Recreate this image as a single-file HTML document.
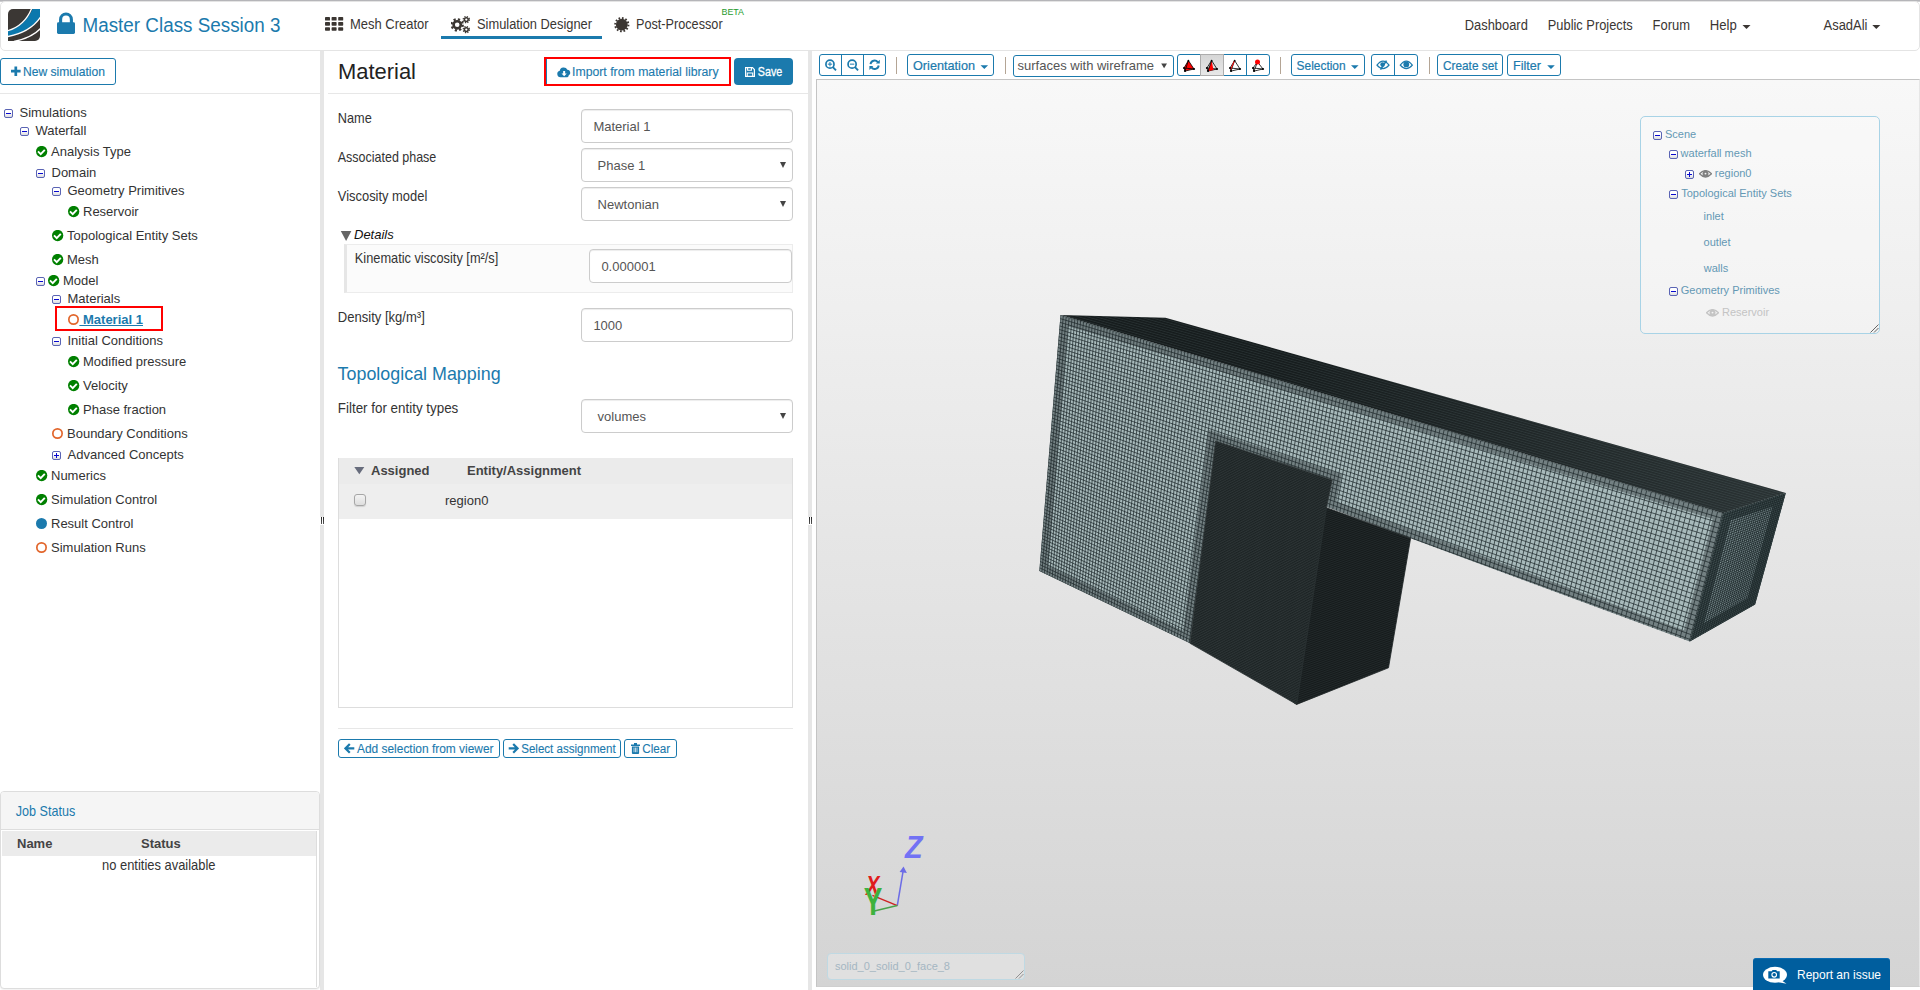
<!DOCTYPE html>
<html lang="en">
<head>
<meta charset="utf-8">
<title>Master Class Session 3</title>
<style>
*{box-sizing:border-box;margin:0;padding:0}
html,body{width:1920px;height:990px;overflow:hidden;background:#fff}
body{position:relative;font-family:"Liberation Sans",sans-serif;font-size:13px;color:#333}
.abs{position:absolute}
/* tree */
.tg{position:absolute;width:9px;height:9px;border:1px solid #5a64b4;border-radius:2px;background:linear-gradient(#fff 35%,#dcdce0)}
.tg:before{content:"";position:absolute;left:1px;top:2.8px;width:5px;height:1.5px;background:#0808d0}
.tg.plus:after{content:"";position:absolute;left:2.8px;top:1px;width:1.5px;height:5px;background:#0808d0}
.circ{position:absolute;width:11px;height:11px;border-radius:50%;box-shadow:inset 0 0 0 1.7px #e2662c}
.dot{position:absolute;width:11px;height:11px;border-radius:50%;background:#1b7aad}
.tr{position:absolute;white-space:nowrap;line-height:15px;font-size:13px;color:#333}
/* form */
.inp{position:absolute;height:34px;border:1px solid #ccc;border-radius:4px;background:#fff;box-shadow:inset 0 1px 1px rgba(0,0,0,.075)}
.inp span{position:absolute;top:9px;font-size:13px;line-height:15px;color:#555;white-space:nowrap}
.inp i{position:absolute;right:6px;top:13px;width:0;height:0;border-left:3px solid transparent;border-right:3px solid transparent;border-top:6px solid #444}
.btn{position:absolute;border:1px solid #1b7aad;border-radius:3px;background:#fff;color:#1b7aad;white-space:nowrap}
</style>
</head>
<body>
<div class="abs" style="left:0;top:0;width:1920px;height:2px;background:linear-gradient(#a9a9ad,#d9d9db)"></div>
<div class="abs" style="left:0;top:1px;width:1920px;height:50px;border:1px solid #e4e4e4;border-radius:5px;background:#fff"></div>
<svg class="abs" style="left:8px;top:9px" width="32" height="32" viewBox="0 0 32 32">
<defs><clipPath id="lg"><path d="M5 0H32V27a5 5 0 0 1-5 5H0V5a5 5 0 0 1 5-5z"/></clipPath></defs>
<g clip-path="url(#lg)"><rect width="32" height="32" fill="#3b3734"/>
<path d="M24.5 0H32V8.5C25 18 14 24.5 0 27V22C11 19 19.5 11.5 24.5 0z" fill="#0b78ad"/>
<path d="M23.6 -0.5C19 11 11 18.5 -0.5 21.8" fill="none" stroke="#fff" stroke-width="1.3"/>
<path d="M32.5 8.2C25.5 18.5 14 25 -0.5 27.6" fill="none" stroke="#fff" stroke-width="1.3"/>
<path d="M32.5 19.5C27 25.5 18 30 6 32.5" fill="none" stroke="#fff" stroke-width="1.3"/>
</g></svg>
<svg class="abs" style="left:57px;top:12px" width="18" height="22" viewBox="0 0 18 22">
<path d="M3.6 11V7.4a5.4 5.4 0 0 1 10.8 0V11" fill="none" stroke="#1b7aad" stroke-width="3.1"/>
<rect x="0" y="10.3" width="18" height="11.7" rx="1.4" fill="#1b7aad"/></svg>
<div class="abs" style="left:441px;top:36px;width:161px;height:3px;background:#1b7aad"></div>
<svg class="abs" style="left:325px;top:17px" width="19" height="14" viewBox="0 0 19 14" fill="#3b3632">
<rect x="0" y="0" width="5" height="3.6" rx=".7"/><rect x="6.6" y="0" width="5" height="3.6" rx=".7"/><rect x="13.2" y="0" width="5" height="3.6" rx=".7"/>
<rect x="0" y="5.1" width="5" height="3.6" rx=".7"/><rect x="6.6" y="5.1" width="5" height="3.6" rx=".7"/><rect x="13.2" y="5.1" width="5" height="3.6" rx=".7"/>
<rect x="0" y="10.2" width="5" height="3.6" rx=".7"/><rect x="6.6" y="10.2" width="5" height="3.6" rx=".7"/><rect x="13.2" y="10.2" width="5" height="3.6" rx=".7"/></svg>
<svg class="abs" style="left:451px;top:15px" width="20" height="19" viewBox="0 0 20 19">
<g fill="none" stroke="#3b3632">
<circle cx="6.2" cy="9.8" r="3.6" stroke-width="2.6"/>
<circle cx="6.2" cy="9.8" r="5.6" stroke-width="2.2" stroke-dasharray="2.2 2.2"/>
<circle cx="15.3" cy="4.6" r="1.9" stroke-width="1.5"/>
<circle cx="15.3" cy="4.6" r="3.1" stroke-width="1.3" stroke-dasharray="1.25 1.2"/>
<circle cx="15.3" cy="14.6" r="1.9" stroke-width="1.5"/>
<circle cx="15.3" cy="14.6" r="3.1" stroke-width="1.3" stroke-dasharray="1.25 1.2"/>
</g></svg>
<svg class="abs" style="left:613px;top:16px" width="18" height="18" viewBox="0 0 18 18">
<circle cx="8.8" cy="8.7" r="5.9" fill="#3b3632"/>
<circle cx="8.8" cy="8.7" r="6.6" fill="none" stroke="#3b3632" stroke-width="2" stroke-dasharray="1.7 1.75"/></svg>
<svg class="abs" style="left:0;top:0" width="1920" height="56" font-family="Liberation Sans, sans-serif" fill="#3a3633">
<text x="82.5" y="31.6" font-size="19.6" fill="#1b7aad" textLength="198" lengthAdjust="spacingAndGlyphs">Master Class Session 3</text>
<g font-size="14">
<text x="350" y="28.5" textLength="78.6" lengthAdjust="spacingAndGlyphs">Mesh Creator</text>
<text x="477" y="28.5" textLength="115" lengthAdjust="spacingAndGlyphs">Simulation Designer</text>
<text x="636" y="28.5" textLength="86.6" lengthAdjust="spacingAndGlyphs">Post-Processor</text>
<text x="1464.8" y="29.5" textLength="63" lengthAdjust="spacingAndGlyphs">Dashboard</text>
<text x="1547.8" y="29.5" textLength="85" lengthAdjust="spacingAndGlyphs">Public Projects</text>
<text x="1652.5" y="29.5" textLength="37.5" lengthAdjust="spacingAndGlyphs">Forum</text>
<text x="1709.8" y="29.5" textLength="27" lengthAdjust="spacingAndGlyphs">Help</text>
<text x="1823.5" y="29.5" textLength="44" lengthAdjust="spacingAndGlyphs">AsadAli</text>
</g>
<text x="721.5" y="15" font-size="9.2" fill="#1e9a2c" textLength="22.5" lengthAdjust="spacingAndGlyphs">BETA</text>
<path d="M1742.5 25h8l-4 4zM1872.3 25h8l-4 4z"/>
</svg>
<!--NAVEND-->
<div class="abs" style="left:320px;top:51px;width:4px;height:939px;background:#e6e6e6"></div>
<div class="abs" style="left:0;top:93px;width:320px;height:1px;background:#e7e7e7"></div>
<div class="btn" style="left:0;top:58px;width:116px;height:27px;border-radius:3px"></div>
<svg class="abs" style="left:10px;top:66px" width="11" height="11" viewBox="0 0 11 11"><path d="M5.8 0.4V10M1 5.2H10.6" stroke="#1b7aad" stroke-width="2.7" fill="none"/></svg>
<i class="tg" style="left:4px;top:109px"></i>
<div class="tr" style="left:19.5px;top:105px">Simulations</div>
<i class="tg" style="left:20px;top:127px"></i>
<div class="tr" style="left:35.5px;top:123px">Waterfall</div>
<svg class="abs" style="left:36px;top:146px" width="12" height="12" viewBox="0 0 12 12"><circle cx="5.65" cy="5.55" r="5.65" fill="#008000"/><path d="M2 5.4L4.7 8.1L8.8 3.8" fill="none" stroke="#fff" stroke-width="1.9"/></svg>
<div class="tr" style="left:51px;top:144px">Analysis Type</div>
<i class="tg" style="left:36px;top:169px"></i>
<div class="tr" style="left:51.5px;top:165px">Domain</div>
<i class="tg" style="left:52px;top:187px"></i>
<div class="tr" style="left:67.5px;top:183px">Geometry Primitives</div>
<svg class="abs" style="left:68px;top:206px" width="12" height="12" viewBox="0 0 12 12"><circle cx="5.65" cy="5.55" r="5.65" fill="#008000"/><path d="M2 5.4L4.7 8.1L8.8 3.8" fill="none" stroke="#fff" stroke-width="1.9"/></svg>
<div class="tr" style="left:83px;top:204px">Reservoir</div>
<svg class="abs" style="left:52px;top:230px" width="12" height="12" viewBox="0 0 12 12"><circle cx="5.65" cy="5.55" r="5.65" fill="#008000"/><path d="M2 5.4L4.7 8.1L8.8 3.8" fill="none" stroke="#fff" stroke-width="1.9"/></svg>
<div class="tr" style="left:67px;top:228px">Topological Entity Sets</div>
<svg class="abs" style="left:52px;top:254px" width="12" height="12" viewBox="0 0 12 12"><circle cx="5.65" cy="5.55" r="5.65" fill="#008000"/><path d="M2 5.4L4.7 8.1L8.8 3.8" fill="none" stroke="#fff" stroke-width="1.9"/></svg>
<div class="tr" style="left:67px;top:252px">Mesh</div>
<i class="tg" style="left:36px;top:277px"></i>
<div class="tr" style="left:63px;top:273px">Model</div>
<i class="tg" style="left:52px;top:295px"></i>
<div class="tr" style="left:67.5px;top:291px">Materials</div>
<i class="tg" style="left:52px;top:337px"></i>
<div class="tr" style="left:67.5px;top:333px">Initial Conditions</div>
<svg class="abs" style="left:68px;top:356px" width="12" height="12" viewBox="0 0 12 12"><circle cx="5.65" cy="5.55" r="5.65" fill="#008000"/><path d="M2 5.4L4.7 8.1L8.8 3.8" fill="none" stroke="#fff" stroke-width="1.9"/></svg>
<div class="tr" style="left:83px;top:354px">Modified pressure</div>
<svg class="abs" style="left:68px;top:380px" width="12" height="12" viewBox="0 0 12 12"><circle cx="5.65" cy="5.55" r="5.65" fill="#008000"/><path d="M2 5.4L4.7 8.1L8.8 3.8" fill="none" stroke="#fff" stroke-width="1.9"/></svg>
<div class="tr" style="left:83px;top:378px">Velocity</div>
<svg class="abs" style="left:68px;top:404px" width="12" height="12" viewBox="0 0 12 12"><circle cx="5.65" cy="5.55" r="5.65" fill="#008000"/><path d="M2 5.4L4.7 8.1L8.8 3.8" fill="none" stroke="#fff" stroke-width="1.9"/></svg>
<div class="tr" style="left:83px;top:402px">Phase fraction</div>
<i class="circ" style="left:52px;top:428px"></i>
<div class="tr" style="left:67px;top:426px">Boundary Conditions</div>
<i class="tg plus" style="left:52px;top:451px"></i>
<div class="tr" style="left:67.5px;top:447px">Advanced Concepts</div>
<svg class="abs" style="left:36px;top:470px" width="12" height="12" viewBox="0 0 12 12"><circle cx="5.65" cy="5.55" r="5.65" fill="#008000"/><path d="M2 5.4L4.7 8.1L8.8 3.8" fill="none" stroke="#fff" stroke-width="1.9"/></svg>
<div class="tr" style="left:51px;top:468px">Numerics</div>
<svg class="abs" style="left:36px;top:494px" width="12" height="12" viewBox="0 0 12 12"><circle cx="5.65" cy="5.55" r="5.65" fill="#008000"/><path d="M2 5.4L4.7 8.1L8.8 3.8" fill="none" stroke="#fff" stroke-width="1.9"/></svg>
<div class="tr" style="left:51px;top:492px">Simulation Control</div>
<i class="dot" style="left:36px;top:518px"></i>
<div class="tr" style="left:51px;top:516px">Result Control</div>
<i class="circ" style="left:36px;top:542px"></i>
<div class="tr" style="left:51px;top:540px">Simulation Runs</div>
<svg class="abs" style="left:48px;top:275px" width="12" height="12" viewBox="0 0 12 12"><circle cx="5.65" cy="5.55" r="5.65" fill="#008000"/><path d="M2 5.4L4.7 8.1L8.8 3.8" fill="none" stroke="#fff" stroke-width="1.9"/></svg>
<div class="abs" style="left:55px;top:306px;width:108px;height:25px;border:2px solid #f00"></div>
<i class="circ" style="left:68px;top:314px"></i>
<div class="tr" style="left:79.4px;top:312px;color:#1b7aad;font-weight:bold;text-decoration:underline;white-space:pre"> Material 1</div>
<div class="abs" style="left:0;top:791px;width:320px;height:198px;border:1px solid #ddd;border-radius:4px;background:#fff;box-shadow:0 1px 1px rgba(0,0,0,.05)"></div>
<div class="abs" style="left:1px;top:792px;width:318px;height:38px;background:#f5f5f5;border-bottom:1px solid #ddd;border-radius:3px 3px 0 0"></div>
<div class="abs" style="left:2px;top:831px;width:315px;height:156px;border-right:1px solid #ddd"></div>
<div class="abs" style="left:2px;top:831px;width:314px;height:25px;background:#ebebeb"></div>
<div class="tr" style="left:17px;top:836px;font-weight:bold;color:#444">Name</div>
<div class="tr" style="left:141px;top:836px;font-weight:bold;color:#444">Status</div>
<svg class="abs" style="left:0;top:56px" width="320" height="934" font-family="Liberation Sans, sans-serif">
<text x="23" y="19.9" font-size="12.1" fill="#1b7aad" stroke="#1b7aad" stroke-width=".15" textLength="82" lengthAdjust="spacingAndGlyphs">New simulation</text>
<text x="15.8" y="760" font-size="14.4" fill="#1b7aad" textLength="59.5" lengthAdjust="spacingAndGlyphs">Job Status</text>
<text x="102" y="813.7" font-size="14.2" fill="#333" textLength="113.5" lengthAdjust="spacingAndGlyphs">no entities available</text>
</svg>
<!--LEFTEND-->
<div class="abs" style="left:808px;top:51px;width:4px;height:939px;background:#e6e6e6"></div>
<div class="abs" style="left:328px;top:93px;width:480px;height:1px;background:#e7e7e7"></div>
<div class="abs" style="left:546px;top:59px;width:1px;height:25px;background:#1b7aad"></div>
<div class="abs" style="left:544px;top:57px;width:187px;height:29px;border:2px solid #f00"></div>
<svg class="abs" style="left:556.6px;top:65.8px" width="14.3" height="12.1" viewBox="0 0 13 11"><path d="M3.1 10.3a3 3 0 0 1-.6-5.9a3.6 3.6 0 0 1 6.9-.9a2.6 2.6 0 0 1 1.3 4.9a2.4 2.4 0 0 1-1.2 1.9z" fill="#1b7aad"/><path d="M5.6 4.6h1.8v2.2h1.5l-2.4 2.5l-2.4-2.5h1.5z" fill="#fff"/></svg>
<div class="abs" style="left:734px;top:58px;width:59px;height:27px;border-radius:4px;background:#1b7aad"></div>
<svg class="abs" style="left:745px;top:66.5px" width="10" height="10" viewBox="0 0 10 10"><path d="M.6.6h6.9l1.9 1.9v6.9H.6z" fill="none" stroke="#fff" stroke-width="1.2"/><path d="M2.6.6v2.7h3.8V.6M2.3 9.4V6h5.4v3.4" fill="none" stroke="#fff" stroke-width="1.1"/></svg>
<div class="inp" style="left:581px;top:109px;width:212px"><span style="left:11.4px">Material 1</span></div>
<div class="inp" style="left:581px;top:148px;width:212px"><span style="left:15.6px">Phase 1</span><i></i></div>
<div class="inp" style="left:581px;top:187px;width:212px"><span style="left:15.6px">Newtonian</span><i></i></div>
<svg class="abs" style="left:340px;top:230px" width="13" height="12" viewBox="0 0 13 12"><path d="M.8 1h10.6L6.1 11z" fill="#666"/></svg>
<div class="tr" style="left:354px;top:227px;font-style:italic;color:#111">Details</div>
<div class="abs" style="left:344px;top:244px;width:449px;height:49px;background:#fbfbfb;border:1px solid #ececec;border-left:3px solid #e6e6e6"></div>
<div class="inp" style="left:589px;top:249px;width:203px"><span style="left:11.4px">0.000001</span></div>
<div class="inp" style="left:581px;top:308px;width:212px"><span style="left:11.4px">1000</span></div>
<div class="inp" style="left:581px;top:399px;width:212px"><span style="left:15.6px">volumes</span><i></i></div>
<div class="abs" style="left:338px;top:458px;width:455px;height:250px;border:1px solid #ddd;background:#fff"></div>
<div class="abs" style="left:339px;top:458px;width:453px;height:26px;background:#ebebeb"></div>
<div class="abs" style="left:339px;top:484px;width:453px;height:35px;background:#eee"></div>
<svg class="abs" style="left:354px;top:466px" width="11" height="9" viewBox="0 0 11 9"><path d="M.3.9h10L5.3 8.2z" fill="#676c7c"/></svg>
<div class="tr" style="left:371px;top:463px;font-weight:bold;color:#444">Assigned</div>
<div class="tr" style="left:467px;top:463px;font-weight:bold;color:#444">Entity/Assignment</div>
<div class="abs" style="left:354px;top:494px;width:12px;height:12px;border:1px solid #a6a6a6;border-radius:3px;background:linear-gradient(#f3f3f3,#dedede);box-shadow:0 1px 1px rgba(0,0,0,.12)"></div>
<div class="tr" style="left:445px;top:493px">region0</div>
<div class="abs" style="left:338px;top:728px;width:455px;height:1px;background:#e7e7e7"></div>
<div class="btn" style="left:338px;top:739px;width:162px;height:19px"></div>
<div class="btn" style="left:503px;top:739px;width:118px;height:19px"></div>
<div class="btn" style="left:624px;top:739px;width:53px;height:19px"></div>
<svg class="abs" style="left:344px;top:743px" width="11" height="11" viewBox="0 0 11 11"><path d="M10.3 5.4H2M5.8 1L1.5 5.4L5.8 9.8" fill="none" stroke="#1b7aad" stroke-width="2.2"/></svg>
<svg class="abs" style="left:508px;top:743px" width="11" height="11" viewBox="0 0 11 11"><path d="M.7 5.4H9M5.2 1L9.5 5.4L5.2 9.8" fill="none" stroke="#1b7aad" stroke-width="2.2"/></svg>
<svg class="abs" style="left:631px;top:743px" width="9" height="11" viewBox="0 0 9 11"><path d="M0 1.6h9v1.3H0zM3 0h3v1.6H3zM.9 3.4h7.2v6.6a1 1 0 0 1-1 1H1.9a1 1 0 0 1-1-1z" fill="#1b7aad"/><path d="M3 4.6v4.6M4.5 4.6v4.6M6 4.6v4.6" stroke="#fff" stroke-width=".7"/></svg>
<svg class="abs" style="left:326px;top:51px" width="482" height="720" font-family="Liberation Sans, sans-serif" fill="#333">
<text x="12" y="28" font-size="21.6" fill="#222" textLength="78" lengthAdjust="spacingAndGlyphs">Material</text>
<text x="246" y="25.3" font-size="12.5" fill="#1b7aad" stroke="#1b7aad" stroke-width=".12" textLength="146.6" lengthAdjust="spacingAndGlyphs">Import from material library</text>
<text x="431.8" y="25.3" font-size="12.8" fill="#fff" stroke="#fff" stroke-width=".3" textLength="24.5" lengthAdjust="spacingAndGlyphs">Save</text>
<g font-size="14.2">
<text x="11.8" y="72" textLength="34" lengthAdjust="spacingAndGlyphs">Name</text>
<text x="11.8" y="110.6" textLength="98.5" lengthAdjust="spacingAndGlyphs">Associated phase</text>
<text x="11.8" y="149.9" textLength="89.5" lengthAdjust="spacingAndGlyphs">Viscosity model</text>
<text x="28.8" y="212.4" textLength="143.5" lengthAdjust="spacingAndGlyphs">Kinematic viscosity [m²/s]</text>
<text x="11.8" y="271.4" textLength="87" lengthAdjust="spacingAndGlyphs">Density [kg/m³]</text>
<text x="11.8" y="361.7" textLength="120.5" lengthAdjust="spacingAndGlyphs">Filter for entity types</text>
</g>
<text x="11.6" y="328.6" font-size="18.2" fill="#1b7aad" textLength="163" lengthAdjust="spacingAndGlyphs">Topological Mapping</text>
<g font-size="12.3" fill="#1b7aad" stroke="#1b7aad" stroke-width=".1">
<text x="31" y="701.8" textLength="136.5" lengthAdjust="spacingAndGlyphs">Add selection from viewer</text>
<text x="195.2" y="701.8" textLength="94.5" lengthAdjust="spacingAndGlyphs">Select assignment</text>
<text x="316.2" y="701.8" textLength="28" lengthAdjust="spacingAndGlyphs">Clear</text>
</g>
</svg>
<div class="abs" style="left:320px;top:517px;width:4px;height:8px;background:#fff"></div><div class="abs" style="left:321px;top:517px;width:1px;height:7px;background:linear-gradient(#222,#555)"></div><div class="abs" style="left:323px;top:517px;width:1px;height:7px;background:linear-gradient(#222,#555)"></div>
<div class="abs" style="left:808px;top:517px;width:4px;height:8px;background:#fff"></div><div class="abs" style="left:809px;top:517px;width:1px;height:7px;background:linear-gradient(#222,#555)"></div><div class="abs" style="left:811px;top:517px;width:1px;height:7px;background:linear-gradient(#222,#555)"></div>
<!--MIDEND-->
<div class="btn" style="left:819px;top:54px;width:67px;height:22px;"></div>
<div class="abs" style="left:841px;top:54px;width:1px;height:22px;background:#1b7aad"></div>
<div class="abs" style="left:863px;top:54px;width:1px;height:22px;background:#1b7aad"></div>
<div class="btn" style="left:907px;top:54px;width:87px;height:22px;"></div>
<div class="btn" style="left:1013px;top:55px;width:161px;height:22px;"></div>
<div class="btn" style="left:1177px;top:54px;width:93px;height:22px;"></div>
<div class="abs" style="left:1200px;top:54px;width:24px;height:22px;background:linear-gradient(#d6d6d6,#e8e8e8);border:1px solid #adadad"></div>
<div class="abs" style="left:1246px;top:54px;width:1px;height:22px;background:#1b7aad"></div>
<div class="btn" style="left:1291px;top:54px;width:74px;height:22px;"></div>
<div class="btn" style="left:1371px;top:54px;width:47px;height:22px;"></div>
<div class="abs" style="left:1394px;top:54px;width:1px;height:22px;background:#1b7aad"></div>
<div class="btn" style="left:1437px;top:54px;width:66px;height:22px;"></div>
<div class="btn" style="left:1507px;top:54px;width:54px;height:22px;"></div>
<div class="abs" style="left:896px;top:57px;width:1.4px;height:17px;background:#b4a595"></div>
<div class="abs" style="left:1005px;top:57px;width:1.4px;height:17px;background:#b4a595"></div>
<div class="abs" style="left:1280px;top:57px;width:1.4px;height:17px;background:#b4a595"></div>
<div class="abs" style="left:1429px;top:57px;width:1.4px;height:17px;background:#b4a595"></div>
<svg class="abs" style="left:812px;top:48px" width="760" height="36" font-family="Liberation Sans, sans-serif">
<g fill="none" stroke="#1b7aad" stroke-width="1.7">
<circle cx="17.97" cy="16.15" r="4.05"/><path d="M20.9 19.1L24 22.3" stroke-width="1.9"/><path d="M15.8 16.15h4.4M17.97 13.95v4.4" stroke-width="1"/>
<circle cx="40.1" cy="16.15" r="4.05"/><path d="M43 19.1L46.1 22.3" stroke-width="1.9"/><path d="M37.9 16.15h4.4" stroke-width="1"/>
<path d="M58.50 16.10A4.1 4.1 0 0 1 65.80 14.20M66.70 17.50A4.1 4.1 0 0 1 59.40 19.40" stroke-width="1.9"/>
</g>
<path d="M67.80 11.70v3.9h-3.9zM57.40 21.90v-3.9h3.9z" fill="#1b7aad"/>
<g font-size="12.2" fill="#1b7aad" stroke="#1b7aad" stroke-width=".2">
<text x="101" y="21.9" textLength="62" lengthAdjust="spacingAndGlyphs">Orientation</text>
<text x="484.6" y="21.9" textLength="49" lengthAdjust="spacingAndGlyphs">Selection</text>
<text x="631" y="21.9" textLength="54.5" lengthAdjust="spacingAndGlyphs">Create set</text>
<text x="701" y="21.9" textLength="28" lengthAdjust="spacingAndGlyphs">Filter</text>
</g>
<path d="M168.5 17.2h7.6l-3.8 3.8zM539 17.2h7.6l-3.8 3.8zM735.2 17.2h7.6l-3.8 3.8z" fill="#1b7aad"/>
<path d="M349.2 15.5h5.8l-2.9 4.8z" fill="#444"/>
<!-- tetra icons -->
<g stroke="#000" stroke-width=".8" fill="none">
<path d="M376.4 12.5L372 20L373 23.1L382 21z" fill="#f00"/><path d="M376.4 12.5L373 23.1M372 20L382 21"/>
<path d="M399.6 12.5L394.9 20L396 23.1L405 21zM394.9 20L405 21"/><path d="M399.6 12.5L396 23.1L401.5 22z" fill="#f00" stroke="none"/><path d="M399.6 12.5L396 23.1"/>
<path d="M422.6 12.5L418 20L419 23.1L428 21zM418 20L428 21M422.6 12.5L419 23.1"/><path d="M422.6 12.5L418.6 21.5" stroke="#f00" stroke-width="1"/>
<path d="M445.5 14L441 20L442 23.1L451 21zM441 20L451 21M445.5 14L442 23.1"/>
</g>
<g fill="#000">
<circle cx="376.4" cy="12.7" r=".9"/><circle cx="372" cy="20" r="1"/><circle cx="373" cy="23" r="1.1"/><circle cx="382" cy="21" r="1.1"/>
<circle cx="399.6" cy="12.7" r=".9"/><circle cx="394.9" cy="20" r="1"/><circle cx="396" cy="23" r="1.1"/><circle cx="405" cy="21" r="1.1"/>
<circle cx="422.6" cy="12.7" r=".9"/><circle cx="418" cy="20" r="1"/><circle cx="419" cy="23" r="1.1"/><circle cx="428" cy="21" r="1.1"/>
<circle cx="441" cy="20" r="1"/><circle cx="442" cy="23" r="1.1"/><circle cx="451" cy="21" r="1.1"/>
</g>
<circle cx="445.5" cy="14" r="2.5" fill="#f00"/>
<!-- eyes -->
<g fill="none" stroke="#1b7aad" stroke-width="1.3">
<path d="M565 17.2q6-8 12 0q-6 7-12 0z"/><path d="M574.5 12.6L568.5 21.6" stroke-width="1.6"/>
<path d="M588.3 17.2q6-8 12 0q-6 7-12 0z"/>
</g>
<circle cx="570.6" cy="16.6" r="2.3" fill="#1b7aad"/><circle cx="594.3" cy="16.4" r="2.9" fill="#1b7aad"/>
</svg>
<div class="tr" style="left:1017.5px;top:58px;font-size:13px;line-height:15px;color:#555">surfaces with wireframe</div>
<!--VIEWSTART-->
<svg class="abs" style="left:817px;top:80px" width="1103" height="906" viewBox="0 0 1103 906">
<defs><linearGradient id="bg" x1="0" y1="0" x2="0" y2="1"><stop offset="0" stop-color="#f8f8f8"/><stop offset="1" stop-color="#d4d4d4"/></linearGradient>
<clipPath id="cf"><polygon points="243.5,235 906,433.2 872.8,561.5 593.6,458.3 509.7,426.7 515.2,400 398.6,361 373,563.3 222.3,491"/></clipPath>
<clipPath id="ce"><polygon points="906,433.2 968.8,413 938.1,524.4 872.8,561.5"/></clipPath>
<pattern id="pd" width="2.2" height="2.2" patternUnits="userSpaceOnUse" patternTransform="rotate(-28)"><rect width="2.2" height="2.2" fill="#2d3536"/><rect width="2.2" height="1.1" fill="#1c2324"/></pattern>
<pattern id="ps" width="2" height="2" patternUnits="userSpaceOnUse" patternTransform="rotate(-20)"><rect width="2" height="2" fill="#232a2b"/><rect width="2" height="1.1" fill="#151a1b"/></pattern>
<pattern id="pt" width="2.4" height="2.4" patternUnits="userSpaceOnUse" patternTransform="rotate(16)"><rect width="2.4" height="2.4" fill="#262f30"/><rect width="2.4" height="1.4" fill="#151b1c"/></pattern>
<linearGradient id="tg" x1="0" y1="0" x2="1" y2="0"><stop offset=".3" stop-color="#8fa3a6" stop-opacity="0"/><stop offset="1" stop-color="#8fa3a6" stop-opacity=".16"/></linearGradient>
</defs>
<rect width="1103" height="906" fill="url(#bg)"/>
<polygon points="243.5,235 348.5,237.7 968.8,413 906,433.2" fill="url(#pt)"/>
<polygon points="243.5,235 348.5,237.7 968.8,413 906,433.2" fill="url(#tg)"/>
<polygon points="243.5,235 906,433.2 872.8,561.5 593.6,458.3 509.7,426.7 515.2,400 398.6,361 373,563.3 222.3,491" fill="#a8babb"/>
<g clip-path="url(#cf)"><path d="M243.5 235L222.3 491M246.3 235.9L224.9 492.2M249.2 236.7L227.4 493.5M252.1 237.6L230 494.7M255 238.4L232.6 495.9M257.8 239.3L235.2 497.2M260.7 240.2L237.8 498.4M263.6 241L240.4 499.7M266.5 241.9L243 500.9M269.5 242.8L245.6 502.2M272.4 243.6L248.2 503.4M275.3 244.5L250.9 504.7M278.3 245.4L253.5 506M281.2 246.3L256.2 507.3M284.2 247.2L258.8 508.5M287.2 248.1L261.5 509.8M290.2 249L264.2 511.1M293.1 249.9L266.9 512.4M296.1 250.7L269.6 513.7M299.2 251.6L272.3 515M302.2 252.6L275 516.3M305.2 253.5L277.7 517.6M308.2 254.4L280.4 518.9M311.3 255.3L283.2 520.2M314.3 256.2L285.9 521.5M317.4 257.1L288.7 522.8M320.5 258L291.4 524.2M323.6 259L294.2 525.5M326.7 259.9L297 526.8M329.8 260.8L299.8 528.2M332.9 261.7L302.6 529.5M336 262.7L305.4 530.8M339.1 263.6L308.2 532.2M342.3 264.5L311 533.5M345.4 265.5L313.8 534.9M348.6 266.4L316.7 536.3M351.7 267.4L319.5 537.6M354.9 268.3L322.4 539M358.1 269.3L325.2 540.4M361.3 270.2L328.1 541.8M364.5 271.2L331 543.1M367.7 272.2L333.9 544.5M371 273.1L336.8 545.9M374.2 274.1L339.7 547.3M377.4 275.1L342.6 548.7M380.7 276L345.5 550.1M384 277L348.4 551.5M387.2 278L351.4 552.9M390.5 279L354.3 554.3M393.8 280L357.3 555.8M397.1 281L360.3 557.2M400.5 282L363.2 558.6M403.8 283L366.2 560M407.1 284L369.2 561.5M410.5 285L372.2 562.9M413.8 286L375.2 564.4M417.2 287L378.3 565.8M420.6 288L381.3 567.3M424 289L384.3 568.7M427.4 290L387.4 570.2M430.8 291L390.5 571.7M434.2 292L393.5 573.1M437.6 293.1L396.6 574.6M441.1 294.1L399.7 576.1M444.5 295.1L402.8 577.6M448 296.2L405.9 579.1M451.4 297.2L409 580.6M454.9 298.3L412.1 582.1M458.4 299.3L415.3 583.6M461.9 300.3L418.4 585.1M465.4 301.4L421.6 586.6M469 302.4L424.8 588.1M472.5 303.5L427.9 589.6M476 304.6L431.1 591.2M479.6 305.6L434.3 592.7M483.2 306.7L437.5 594.2M486.7 307.8L440.7 595.8M490.3 308.8L443.9 597.3M493.9 309.9L447.2 598.9M497.5 311L450.4 600.4M501.2 312.1L453.7 602M504.8 313.2L456.9 603.6M508.4 314.3L460.2 605.1M512.1 315.4L463.5 606.7M515.8 316.5L466.8 608.3M519.4 317.6L470.1 609.9M523.1 318.7L473.4 611.5M526.8 319.8L476.7 613.1M530.5 320.9L480.1 614.7M534.3 322L483.4 616.3M538 323.1L486.7 617.9M541.7 324.2L490.1 619.5M545.5 325.3L493.5 621.1M549.3 326.5L496.9 622.7M553.1 327.6L500.3 624.4M556.8 328.7L503.7 626M560.6 329.9L507.1 627.6M564.5 331L510.5 629.3M568.3 332.2L513.9 630.9M572.1 333.3L517.4 632.6M576 334.5L520.8 634.2M579.8 335.6L524.3 635.9M583.7 336.8L527.8 637.6M587.6 337.9L531.3 639.2M591.5 339.1L534.8 640.9M595.4 340.3L538.3 642.6M599.3 341.4L541.8 644.3M603.2 342.6L545.3 646M607.2 343.8L548.9 647.7M611.1 345L552.4 649.4M615.1 346.2L556 651.1M619.1 347.4L559.6 652.8M623.1 348.6L563.2 654.5M627.1 349.8L566.7 656.2M631.1 351L570.4 658M635.1 352.2L574 659.7M639.2 353.4L577.6 661.5M643.2 354.6L581.2 663.2M647.3 355.8L584.9 665M651.4 357L588.6 666.7M655.5 358.2L592.2 668.5M659.6 359.5L595.9 670.2M663.7 360.7L599.6 672M667.8 361.9L603.3 673.8M671.9 363.2L607 675.6M676.1 364.4L610.8 677.4M680.3 365.7L614.5 679.2M684.4 366.9L618.3 681M688.6 368.2L622 682.8M692.8 369.4L625.8 684.6M697.1 370.7L629.6 686.4M701.3 372L633.4 688.2M705.5 373.2L637.2 690M709.8 374.5L641 691.9M714 375.8L644.8 693.7M718.3 377.1L648.7 695.6M722.6 378.3L652.5 697.4M726.9 379.6L656.4 699.3M731.2 380.9L660.3 701.1M735.6 382.2L664.2 703M739.9 383.5L668.1 704.9M744.3 384.8L672 706.7M748.7 386.1L675.9 708.6M753 387.4L679.9 710.5M757.4 388.8L683.8 712.4M761.9 390.1L687.8 714.3M766.3 391.4L691.7 716.2M770.7 392.7L695.7 718.1M775.2 394.1L699.7 720M779.6 395.4L703.7 722M784.1 396.7L707.8 723.9M788.6 398.1L711.8 725.8M793.1 399.4L715.8 727.8M797.6 400.8L719.9 729.7M802.2 402.1L724 731.7M806.7 403.5L728.1 733.6M811.3 404.9L732.2 735.6M815.9 406.2L736.3 737.6M820.5 407.6L740.4 739.6M825.1 409L744.5 741.5M829.7 410.4L748.7 743.5M834.3 411.8L752.8 745.5M839 413.1L757 747.5M843.6 414.5L761.2 749.5M848.3 415.9L765.4 751.5M853 417.3L769.6 753.6M857.7 418.7L773.8 755.6M862.4 420.2L778.1 757.6M867.1 421.6L782.3 759.7M871.9 423L786.6 761.7M876.7 424.4L790.8 763.8M881.4 425.8L795.1 765.8M886.2 427.3L799.4 767.9M891 428.7L803.8 769.9M895.8 430.2L808.1 772M900.7 431.6L812.4 774.1M905.5 433.1L816.8 776.2M243.5 235L906 433.2M243.2 238.6L904.7 438.2M242.9 242.3L903.4 443.2M242.6 245.9L902.1 448.2M242.3 249.5L900.8 453.2M242 253.1L899.5 458.2M241.7 256.7L898.3 463.1M241.4 260.3L897 468M241.1 263.9L895.7 473M240.8 267.5L894.4 477.9M240.5 271.1L893.2 482.8M240.2 274.7L891.9 487.7M239.9 278.3L890.6 492.5M239.6 281.8L889.4 497.4M239.3 285.4L888.1 502.3M239 288.9L886.9 507.1M238.7 292.5L885.6 511.9M238.4 296L884.4 516.7M238.2 299.5L883.1 521.5M237.9 303.1L881.9 526.3M237.6 306.6L880.7 531.1M237.3 310.1L879.4 535.9M237 313.6L878.2 540.6M236.7 317.1L877 545.4M236.4 320.6L875.8 550.1M236.1 324.1L874.5 554.8M235.8 327.6L873.3 559.5M235.5 331L872.1 564.2M235.3 334.5L870.9 568.9M235 338L869.7 573.6M234.7 341.4L868.5 578.2M234.4 344.9L867.3 582.9M234.1 348.3L866.1 587.5M233.8 351.8L864.9 592.1M233.5 355.2L863.7 596.7M233.3 358.6L862.5 601.3M233 362L861.3 605.9M232.7 365.5L860.1 610.5M232.4 368.9L858.9 615.1M232.1 372.3L857.8 619.6M231.9 375.7L856.6 624.2M231.6 379.1L855.4 628.7M231.3 382.5L854.2 633.2M231 385.8L853.1 637.7M230.7 389.2L851.9 642.2M230.5 392.6L850.8 646.7M230.2 395.9L849.6 651.2M229.9 399.3L848.4 655.7M229.6 402.6L847.3 660.1M229.3 406L846.1 664.6M229.1 409.3L845 669M228.8 412.7L843.8 673.4M228.5 416L842.7 677.8M228.2 419.3L841.6 682.2M228 422.6L840.4 686.6M227.7 425.9L839.3 691M227.4 429.3L838.2 695.4M227.1 432.6L837 699.7M226.9 435.8L835.9 704.1M226.6 439.1L834.8 708.4M226.3 442.4L833.7 712.7M226.1 445.7L832.6 717M225.8 449L831.4 721.4M225.5 452.2L830.3 725.6M225.2 455.5L829.2 729.9M225 458.7L828.1 734.2M224.7 462L827 738.5M224.4 465.2L825.9 742.7M224.2 468.5L824.8 747M223.9 471.7L823.7 751.2M223.6 474.9L822.6 755.4M223.4 478.2L821.5 759.6M223.1 481.4L820.4 763.8M222.8 484.6L819.4 768M222.6 487.8L818.3 772.2M222.3 491L817.2 776.4" stroke="#1e292b" stroke-width=".74" fill="none"/>
<polygon points="243.5,235 906,433.2 872.8,561.5 593.6,458.3 509.7,426.7 515.2,400 398.6,361 373,563.3 222.3,491" fill="none" stroke="#222b2c" stroke-opacity=".4" stroke-width="17" stroke-linejoin="miter"/></g>
<polygon points="906,433.2 968.8,413 938.1,524.4 872.8,561.5" fill="#7f9193"/>
<g clip-path="url(#ce)"><path d="M906 433.2L872.8 561.5M908.6 432.4L875.5 560M911.2 431.5L878.1 558.5M913.7 430.7L880.8 557M916.2 429.9L883.4 555.5M918.7 429.1L885.9 554M921.1 428.3L888.5 552.6M923.6 427.6L891 551.2M926 426.8L893.5 549.8M928.3 426L895.9 548.4M930.7 425.3L898.4 547M933 424.5L900.8 545.6M935.3 423.8L903.2 544.3M937.5 423.1L905.5 542.9M939.8 422.3L907.8 541.6M942 421.6L910.2 540.3M944.2 420.9L912.4 539M946.4 420.2L914.7 537.7M948.5 419.5L916.9 536.4M950.6 418.8L919.1 535.2M952.7 418.2L921.3 533.9M954.8 417.5L923.5 532.7M956.9 416.8L925.7 531.5M958.9 416.2L927.8 530.3M960.9 415.5L929.9 529.1M962.9 414.9L932 527.9M964.9 414.3L934 526.7M966.9 413.6L936.1 525.5M968.8 413L938.1 524.4M906 433.2L968.8 413M905.3 435.8L968.2 415.2M904.7 438.3L967.6 417.4M904 440.9L967 419.6M903.4 443.4L966.4 421.8M902.7 446L965.8 424M902 448.5L965.2 426.2M901.4 451.1L964.5 428.4M900.7 453.6L963.9 430.6M900.1 456.1L963.3 432.8M899.4 458.6L962.7 435M898.8 461.2L962.1 437.2M898.1 463.7L961.5 439.4M897.5 466.2L960.9 441.5M896.8 468.7L960.3 443.7M896.2 471.2L959.7 445.9M895.5 473.7L959.1 448.1M894.9 476.2L958.5 450.2M894.2 478.7L957.9 452.4M893.6 481.2L957.3 454.6M892.9 483.7L956.8 456.7M892.3 486.2L956.2 458.9M891.6 488.7L955.6 461M891 491.2L955 463.2M890.4 493.6L954.4 465.3M889.7 496.1L953.8 467.5M889.1 498.6L953.2 469.6M888.4 501L952.6 471.8M887.8 503.5L952 473.9M887.2 506L951.4 476M886.5 508.4L950.8 478.2M885.9 510.9L950.3 480.3M885.3 513.3L949.7 482.4M884.6 515.8L949.1 484.5M884 518.2L948.5 486.7M883.4 520.6L947.9 488.8M882.7 523.1L947.3 490.9M882.1 525.5L946.7 493M881.5 527.9L946.2 495.1M880.9 530.3L945.6 497.2M880.2 532.8L945 499.3M879.6 535.2L944.4 501.4M879 537.6L943.8 503.5M878.4 540L943.3 505.6M877.7 542.4L942.7 507.7M877.1 544.8L942.1 509.8M876.5 547.2L941.5 511.9M875.9 549.6L941 514M875.3 552L940.4 516.1M874.6 554.4L939.8 518.2M874 556.7L939.2 520.2M873.4 559.1L938.7 522.3M872.8 561.5L938.1 524.4" stroke="#1b2628" stroke-width=".75" fill="none"/>
<polygon points="906,433.2 968.8,413 938.1,524.4 872.8,561.5" fill="none" stroke="#1b2628" stroke-opacity=".62" stroke-width="18"/></g>
<polygon points="506.7,426.7 593.6,458.3 571.5,587.8 479.7,624.4 476.7,622.6" fill="url(#ps)" stroke="#1c2223" stroke-width=".8"/>
<polygon points="398.6,361 515.2,400 509.7,426.7 479.7,624.4 373,563.3" fill="url(#pd)" stroke="#293132" stroke-width=".8"/>
<g fill="none" stroke-width="1.5"><path d="M80.3 825.6L86.1 791.1" stroke="#6c6ce6"/><path d="M80.3 825.6L55.4 815.4" stroke="#cf2222"/><path d="M80.3 825.6L56.3 831.3" stroke="#4aa24a"/></g>
<path d="M86.5 786.6l-3.9 5.3l7.3 1.1z" fill="#6c6ce6"/>
<g font-family="Liberation Sans, sans-serif" font-weight="bold" font-style="italic">
<text x="88.0" y="778.1" font-size="32" fill="#7272f4" textLength="17.6" lengthAdjust="spacingAndGlyphs">Z</text>
<text x="49.0" y="814.7" font-size="27" fill="#e01c1c" textLength="13.5" lengthAdjust="spacingAndGlyphs">X</text>
<text x="46.8" y="835.4" font-size="38.5" font-style="normal" fill="#3db23d" textLength="18.6" lengthAdjust="spacingAndGlyphs">Y</text>
</g>
</svg>
<!--VIEWSTOP-->
<div class="abs" style="left:816px;top:79px;width:1104px;height:908px;border:1px solid #c4c4c4;border-right-color:#e6e6e6;border-bottom-color:#cfcfcf;pointer-events:none"></div>
<div class="abs" style="left:1640px;top:116px;width:240px;height:218px;border:1px solid #a8d3e6;border-radius:5px;background:rgba(255,255,255,.28)"></div>
<i class="tg" style="left:1653px;top:131px"></i>
<div class="tr" style="left:1665px;top:128px;font-size:11px;line-height:13px;color:#6498b4">Scene</div>
<i class="tg" style="left:1669px;top:150px"></i>
<div class="tr" style="left:1680.6px;top:147px;font-size:11px;line-height:13px;color:#6498b4">waterfall mesh</div>
<i class="tg plus" style="left:1685px;top:170px"></i>
<div class="tr" style="left:1714.8px;top:167px;font-size:11px;line-height:13px;color:#6498b4">region0</div>
<i class="tg" style="left:1669px;top:190px"></i>
<div class="tr" style="left:1681.2px;top:187px;font-size:11px;line-height:13px;color:#6498b4">Topological Entity Sets</div>
<div class="tr" style="left:1703.6px;top:210px;font-size:11px;line-height:13px;color:#6498b4">inlet</div>
<div class="tr" style="left:1703.6px;top:236px;font-size:11px;line-height:13px;color:#6498b4">outlet</div>
<div class="tr" style="left:1703.8px;top:262px;font-size:11px;line-height:13px;color:#6498b4">walls</div>
<i class="tg" style="left:1669px;top:287px"></i>
<div class="tr" style="left:1680.8px;top:284px;font-size:11px;line-height:13px;color:#6498b4">Geometry Primitives</div>
<div class="tr" style="left:1722px;top:306px;font-size:11px;line-height:13px;color:#c4c4c4">Reservoir</div>
<svg class="abs" style="left:1698.5px;top:169.5px" width="13" height="8" viewBox="0 0 13 8"><path d="M.5 3.8Q6.5-2.6 12.5 3.8Q6.5 10.2 .5 3.8z" fill="none" stroke="#808080" stroke-width="1.3"/><circle cx="6.5" cy="3.7" r="3" fill="#808080"/><circle cx="6.5" cy="3.6" r=".95" fill="#f4f4f4"/></svg>
<svg class="abs" style="left:1705.5px;top:308.5px" width="13" height="8" viewBox="0 0 13 8"><path d="M.5 3.8Q6.5-2.6 12.5 3.8Q6.5 10.2 .5 3.8z" fill="none" stroke="#c4c4c4" stroke-width="1.3"/><circle cx="6.5" cy="3.7" r="3" fill="#c4c4c4"/><circle cx="6.5" cy="3.6" r=".95" fill="#f4f4f4"/></svg>
<svg class="abs" style="left:1869px;top:323px" width="10" height="10" viewBox="0 0 10 10"><path d="M1.5 9.5L9.5 1.5M5 9.5L9.5 5" stroke="#555" stroke-width=".9"/></svg>
<div class="abs" style="left:827px;top:953px;width:198px;height:27px;border:1px solid #bfd9e3;border-radius:4px;background:rgba(255,255,255,.28)"></div>
<div class="tr" style="left:835px;top:960px;font-size:11px;line-height:13px;color:#a4b6c2">solid_0_solid_0_face_8</div>
<svg class="abs" style="left:1014px;top:969px" width="10" height="10" viewBox="0 0 10 10"><path d="M1.5 9.5L9.5 1.5M5 9.5L9.5 5" stroke="#888" stroke-width=".9"/></svg>
<div class="abs" style="left:1753px;top:958px;width:137px;height:40px;background:#005e9e;border-top:1px solid #0a6cb4;border-radius:3px 3px 0 0"></div>
<svg class="abs" style="left:1762px;top:966px" width="27" height="19" viewBox="0 0 27 19"><ellipse cx="13" cy="8.8" rx="12" ry="8" fill="#fff"/><path d="M19 14l5.5 3.8l-8-1.6z" fill="#fff"/><path d="M6.3 5.2h3.4l.9-1.3h3.6l.9 1.3h2.6v7.4H6.3z" fill="#005e9e"/><circle cx="12.2" cy="8.8" r="2.3" fill="none" stroke="#fff" stroke-width="1.1"/></svg>
<svg class="abs" style="left:1790px;top:960px" width="100" height="30" font-family="Liberation Sans, sans-serif"><text x="7" y="19.3" font-size="12.8" fill="#fff" textLength="84" lengthAdjust="spacingAndGlyphs">Report an issue</text></svg>
<!--RIGHTEND-->
</body>
</html>
